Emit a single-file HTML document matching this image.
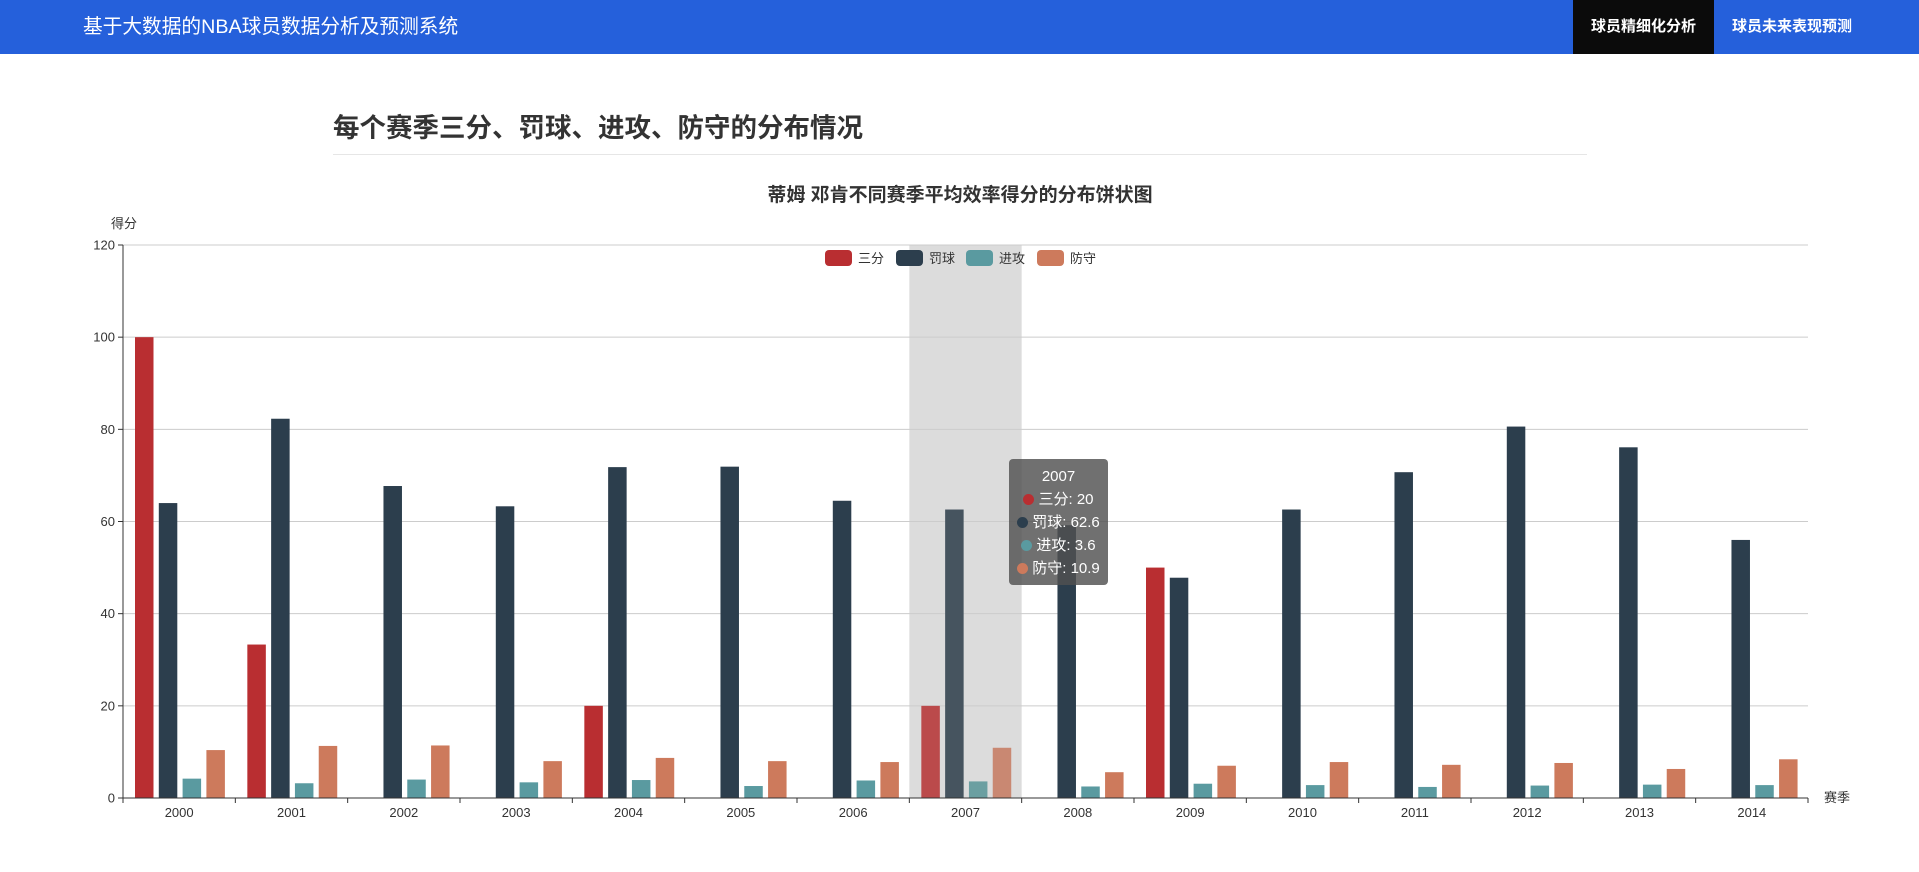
<!DOCTYPE html>
<html><head><meta charset="utf-8">
<style>
*{margin:0;padding:0;box-sizing:border-box}
body{width:1919px;height:872px;background:#fff;font-family:"Liberation Sans","Noto Sans CJK SC",sans-serif;overflow:hidden;position:relative}
.nav{position:absolute;left:0;top:0;width:1919px;height:54px;background:#2560db}
.nav .t{position:absolute;left:83px;top:0;line-height:54px;color:#fff;font-size:19.7px}
.nav .a{position:absolute;top:0;height:54px;line-height:54px;color:#fff;font-size:15px;font-weight:bold;text-align:center}
h2{position:absolute;left:333px;top:110px;font-size:26.5px;font-weight:bold;color:#333;line-height:36px}
.hr{position:absolute;left:333px;top:154px;width:1254px;height:1px;background:#e6e6e6}
svg{position:absolute;left:0;top:0}
.tip{position:absolute;left:1009px;top:459px;width:99px;height:126px;background:rgba(80,80,80,.82);border-radius:4px;color:#fff;font-size:15px;text-align:center;padding-top:6px;line-height:23px}
.tip i{display:inline-block;width:11px;height:11px;border-radius:50%;margin-right:4px;vertical-align:-1px}
</style></head><body>
<div class="nav"><div class="t">基于大数据的NBA球员数据分析及预测系统</div>
<div class="a" style="left:1573px;width:141px;background:#0b0b0b">球员精细化分析</div>
<div class="a" style="left:1714px;width:156px">球员未来表现预测</div></div>
<h2>每个赛季三分、罚球、进攻、防守的分布情况</h2>
<div class="hr"></div>
<svg id="c" width="1919" height="872" xmlns="http://www.w3.org/2000/svg" font-family="Liberation Sans, Noto Sans CJK SC, sans-serif"></svg>
<div class="tip">2007<br><i style="background:#b92e31"></i>三分: 20<br><i style="background:#2c3e4d"></i>罚球: 62.6<br><i style="background:#5a9aa0"></i>进攻: 3.6<br><i style="background:#cd7a5c"></i>防守: 10.9</div>
<script>
var d=[[100,64,4.2,10.4],[33.3,82.3,3.2,11.3],[0,67.7,4,11.4],[0,63.3,3.4,8],[20,71.8,3.9,8.7],[0,71.9,2.6,8],[0,64.5,3.8,7.8],[20,62.6,3.6,10.9],[0,59.2,2.5,5.6],[50,47.8,3.1,7],[0,62.6,2.8,7.8],[0,70.7,2.4,7.2],[0,80.6,2.7,7.6],[0,76.1,2.9,6.3],[0,56,2.8,8.4]];
var col=['#b92e31','#2c3e4d','#5a9aa0','#cd7a5c'],hi=['#bb4a4b','#46545f','#6b9fa1','#c98872'];
var L=123,R=1808,T=245,B=798,w=(R-L)/15,s='';
s+='<text x="960" y="201" text-anchor="middle" font-size="19" font-weight="bold" fill="#333">蒂姆 邓肯不同赛季平均效率得分的分布饼状图</text>';
s+='<text x="111" y="228" font-size="13" fill="#333">得分</text>';
s+='<rect x="'+(L+7*w)+'" y="'+T+'" width="'+w+'" height="'+(B-T)+'" fill="#dcdcdc"/>';
for(var i=0;i<=6;i++){var y=B-i*(B-T)/6;if(i>0)s+='<line x1="'+L+'" x2="'+R+'" y1="'+y+'" y2="'+y+'" stroke="#ccc"/>';
s+='<line x1="'+(L-5)+'" x2="'+L+'" y1="'+y+'" y2="'+y+'" stroke="#333"/><text x="'+(L-8)+'" y="'+(y+4.5)+'" text-anchor="end" font-size="13" fill="#333">'+(i*20)+'</text>';}
var lg=[['三分',825],['罚球',896],['进攻',966],['防守',1037]];
lg.forEach(function(l,k){s+='<rect x="'+l[1]+'" y="250" width="27" height="16" rx="4" fill="'+col[k]+'"/><text x="'+(l[1]+33)+'" y="263" font-size="13" fill="#333">'+l[0]+'</text>';});
for(var i=0;i<15;i++){var x0=L+i*w;
for(var k=0;k<4;k++){var v=d[i][k];if(!v)continue;var h=v/120*(B-T);
s+='<rect x="'+(x0+12+k*23.8)+'" y="'+(B-h)+'" width="18.5" height="'+h+'" fill="'+(i==7?hi[k]:col[k])+'"/>';}
s+='<line x1="'+x0+'" x2="'+x0+'" y1="'+B+'" y2="'+(B+5)+'" stroke="#333"/>';
s+='<text x="'+(x0+w/2)+'" y="817" text-anchor="middle" font-size="13" fill="#333">'+(2000+i)+'</text>';}
s+='<line x1="'+R+'" x2="'+R+'" y1="'+B+'" y2="'+(B+5)+'" stroke="#333"/>';
s+='<line x1="'+L+'" x2="'+L+'" y1="'+T+'" y2="'+B+'" stroke="#333"/><line x1="'+L+'" x2="'+R+'" y1="'+B+'" y2="'+B+'" stroke="#333"/>';
s+='<text x="1824" y="802" font-size="13" fill="#333">赛季</text>';
document.getElementById('c').innerHTML=s;
</script>
</body></html>
